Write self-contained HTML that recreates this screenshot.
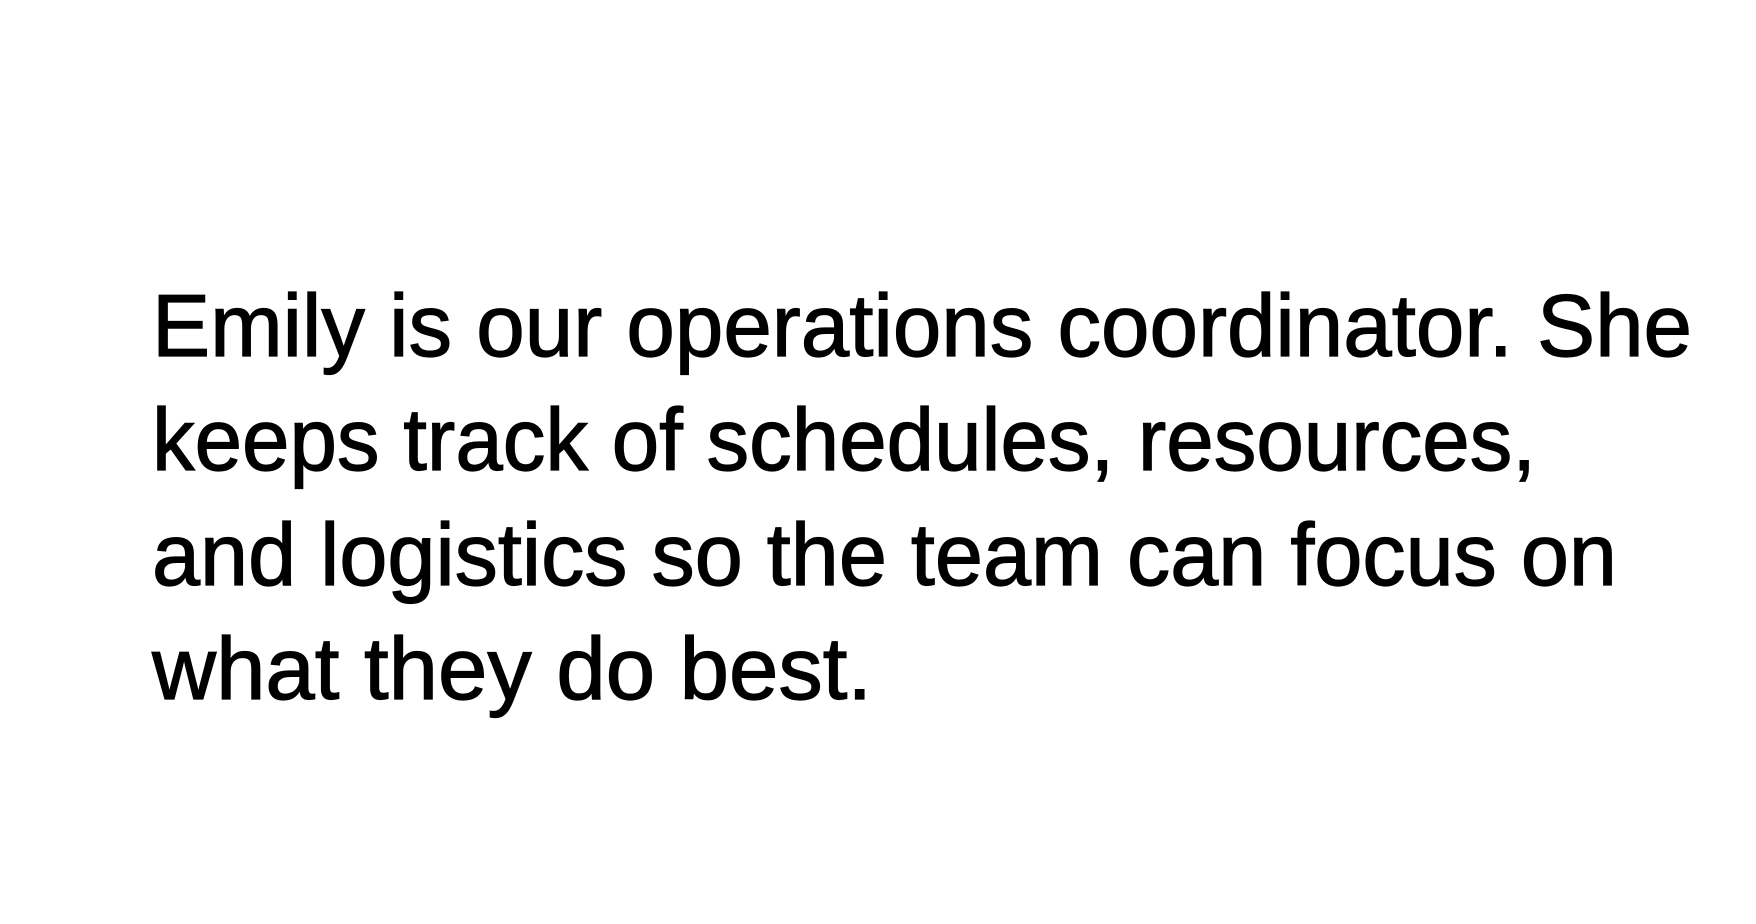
<!DOCTYPE html>
<html><head><meta charset="utf-8"><style>html,body{margin:0;padding:0;background:#fff;width:1756px;height:924px;overflow:hidden}</style></head>
<body>
<svg width="1756" height="924" xmlns="http://www.w3.org/2000/svg" style="display:block">
<g font-family="Liberation Sans, sans-serif" font-size="88" fill="#000" stroke="#000" stroke-width="1.2">
<text x="152" y="356" textLength="1540" lengthAdjust="spacingAndGlyphs">Emily is our operations coordinator. She</text>
<text x="152" y="470" textLength="1384" lengthAdjust="spacingAndGlyphs">keeps track of schedules, resources,</text>
<text x="152" y="585" textLength="1465" lengthAdjust="spacingAndGlyphs">and logistics so the team can focus on</text>
<text x="152" y="699" textLength="720" lengthAdjust="spacingAndGlyphs">what they do best.</text>
</g>
</svg>
</body></html>
